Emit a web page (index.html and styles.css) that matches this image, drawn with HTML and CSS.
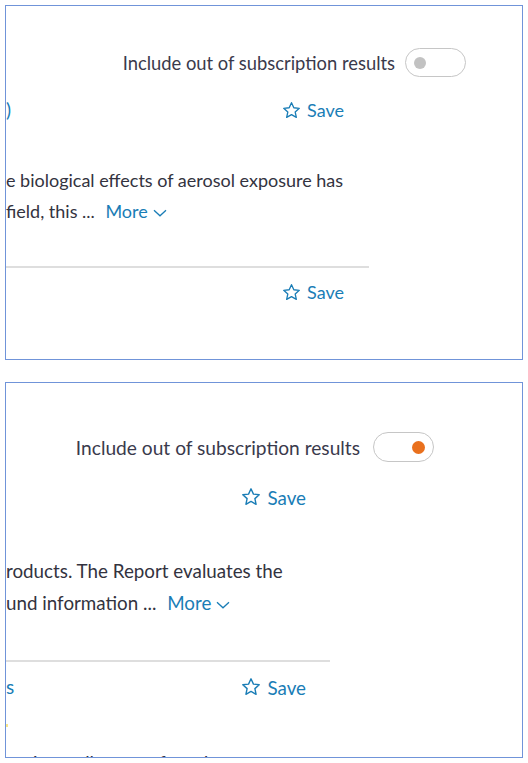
FILE: index.html
```html
<!DOCTYPE html>
<html lang="en">
<head>
<meta charset="utf-8">
<title>Search results</title>
<link rel="stylesheet" href="styles.css">
</head>
<body>
<main class="page">
  <section class="panel panel-a">
    <div class="toggle-row">
      <span class="toggle-label">Include out of subscription results</span>
      <span class="toggle"><span class="knob"></span></span>
    </div>
    <div class="results">
      <div class="title-row">
        <a class="title">)</a>
        <a class="save"><svg class="star" viewBox="0 0 20 20"><path d="M10 1.8l2.45 5.3 5.75.62-4.3 3.9 1.2 5.66L10 14.4l-5.1 2.88 1.2-5.66-4.3-3.9 5.75-.62z"/></svg><span>Save</span></a>
      </div>
      <p class="abstract">
        <span class="line">e biological effects of aerosol exposure has</span>
        <span class="line">field, this ... <a class="more">More<svg class="chev" viewBox="0 0 14 8"><path d="M1 1.2l6 5.6 6-5.6"/></svg></a></span>
      </p>
      <hr class="divider">
      <div class="title-row">
        <a class="title"></a>
        <a class="save"><svg class="star" viewBox="0 0 20 20"><path d="M10 1.8l2.45 5.3 5.75.62-4.3 3.9 1.2 5.66L10 14.4l-5.1 2.88 1.2-5.66-4.3-3.9 5.75-.62z"/></svg><span>Save</span></a>
      </div>
    </div>
  </section>

  <section class="panel panel-b">
    <div class="toggle-row">
      <span class="toggle-label">Include out of subscription results</span>
      <span class="toggle on"><span class="knob"></span></span>
    </div>
    <div class="results">
      <div class="title-row">
        <a class="title"></a>
        <a class="save"><svg class="star" viewBox="0 0 20 20"><path d="M10 1.8l2.45 5.3 5.75.62-4.3 3.9 1.2 5.66L10 14.4l-5.1 2.88 1.2-5.66-4.3-3.9 5.75-.62z"/></svg><span>Save</span></a>
      </div>
      <p class="abstract">
        <span class="line">roducts. The Report evaluates the</span>
        <span class="line">und information ... <a class="more">More<svg class="chev" viewBox="0 0 14 8"><path d="M1 1.2l6 5.6 6-5.6"/></svg></a></span>
      </p>
      <hr class="divider">
      <div class="title-row">
        <a class="title">s</a>
        <a class="save"><svg class="star" viewBox="0 0 20 20"><path d="M10 1.8l2.45 5.3 5.75.62-4.3 3.9 1.2 5.66L10 14.4l-5.1 2.88 1.2-5.66-4.3-3.9 5.75-.62z"/></svg><span>Save</span></a>
      </div>
      <span class="mark"></span>
      <p class="abstract clipped">ions, all types of products</p>
    </div>
  </section>
</main>
</body>
</html>
```

FILE: styles.css
```css
* { box-sizing: border-box; }

html, body {
  margin: 0;
  padding: 0;
  background: #ffffff;
}

body {
  font-family: Lato, "Open Sans", "Liberation Sans", sans-serif;
  color: #333340;
}

.page {
  padding: 5px 0 0 5px;
  display: flex;
  flex-direction: column;
  gap: 22px;
  width: 523px;
}

.panel {
  border: 1px solid #7094d9;
  overflow: hidden;
  display: flex;
  flex-direction: column;
}

.panel-a {
  height: 355px;
  font-size: 18px;
  padding: 42px 56px 0 0;
}

.panel-b {
  height: 376px;
  font-size: 18.8px;
  padding: 49px 88px 0 0;
}

.toggle-row {
  display: flex;
  justify-content: flex-end;
  align-items: center;
  gap: 10px;
}

.panel-b .toggle-row { gap: 13px; }

.toggle-label {
  color: #3a3a4c;
  font-size: 1.02em;
}

.toggle {
  width: 61px;
  height: 29px;
  border: 1.5px solid #c6c6c6;
  border-radius: 15px;
  display: flex;
  align-items: center;
  padding: 0 8px;
  flex: none;
}

.panel-b .toggle { width: 61px; height: 30px; }

.knob {
  width: 12px;
  height: 12px;
  border-radius: 50%;
  background: #c2c2c2;
}

.toggle.on { justify-content: flex-end; }
.toggle.on .knob {
  width: 13px;
  height: 13px;
  background: #e9701d;
}

.results {
  display: flex;
  flex-direction: column;
  width: 363px;
}

.panel-b .results { width: 324px; }

.title-row {
  display: flex;
  justify-content: space-between;
  align-items: center;
  height: 24px;
  padding-right: 25px;
  margin-top: 21px;
}

.panel-b .title-row { height: 26px; margin-top: 22px; padding-right: 24px; }

.title {
  color: #1a7db6;
  font-size: 19px;
  line-height: 24px;
}

.save {
  display: flex;
  align-items: center;
  gap: 6px;
  color: #1a7db6;
}

.star {
  width: 19px;
  height: 19px;
  fill: none;
  stroke: #1a7db6;
  stroke-width: 1.4;
  stroke-linejoin: round;
}

.panel-b .star { width: 20px; height: 20px; }

.abstract {
  margin: 43px 0 0 0;
  line-height: 31px;
  white-space: nowrap;
}

.panel-b .abstract { margin-top: 45px; line-height: 32px; }

.line { display: block; }

.more {
  color: #1a7db6;
  margin-left: 6px;
  white-space: nowrap;
}

.chev {
  width: 14px;
  height: 8px;
  margin-left: 5px;
  fill: none;
  stroke: #1a7db6;
  stroke-width: 1.3;
  vertical-align: middle;
}

.divider {
  border: none;
  height: 2px;
  background: #dedede;
  margin: 39px 0 0 0;
  width: 100%;
}

.panel-b .divider { margin-top: 41px; }

.panel-a .divider + .title-row,
.panel-b .divider + .title-row { margin-top: 12px; }

.mark {
  display: block;
  width: 2px;
  height: 3px;
  background: #f7e58a;
  margin-top: 24px;
}

.panel-b .abstract.clipped {
  margin: 20px 0 0 27px;
  line-height: 32px;
}
```
